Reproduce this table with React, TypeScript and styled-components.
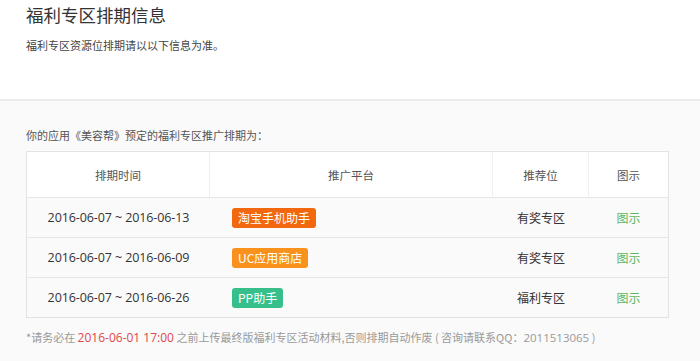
import React from "react";
import styled, { createGlobalStyle } from "styled-components";

const Global = createGlobalStyle`
  html, body { margin: 0; padding: 0; }
  body {
    background: #fafafa;
    font-family: "Microsoft YaHei", "Noto Sans CJK SC", "Open Sans", sans-serif;
    color: #333;
  }
`;

const Header = styled.header`
  background: #fff;
  height: 97px;
  border-bottom: 2px solid #ececec;
  padding: 2px 0 0 26px;
  box-sizing: content-box;
`;

const Title = styled.h1`
  margin: 0;
  font-size: 17.5px;
  font-weight: normal;
  line-height: 26px;
  color: #333;
`;

const Sub = styled.p`
  margin: 9px 0 0;
  font-size: 11px;
  line-height: 16px;
  color: #444;
`;

const Main = styled.main`
  padding: 26px 31px 0 26px;
`;

const Intro = styled.p`
  margin: 0 0 8px;
  font-size: 11px;
  line-height: 16px;
  color: #555;
`;

const Table = styled.div`
  border: 1px solid #e3e3e3;
  width: 643px;
  box-sizing: border-box;
`;

const Row = styled.div<{ $head?: boolean }>`
  display: grid;
  grid-template-columns: 183px 283px 96px 1fr;
  box-sizing: border-box;
  height: ${(p) => (p.$head ? 45 : 40)}px;
  background: ${(p) => (p.$head ? "#fff" : "#fafafa")};
  border-top: ${(p) => (p.$head ? "none" : "1px solid #e6e6e6")};
`;

const Cell = styled.div<{ $head?: boolean; $left?: boolean; $green?: boolean }>`
  display: flex;
  align-items: center;
  justify-content: ${(p) => (p.$left ? "flex-start" : "center")};
  padding-left: ${(p) => (p.$left ? "22px" : "0")};
  font-size: ${(p) => (p.$head ? "11.5px" : "12px")};
  color: ${(p) => (p.$green ? "#5db55d" : p.$head ? "#555" : "#333")};
  border-right: ${(p) => (p.$head ? "1px solid #f0f0f0" : "none")};
  &:last-child { border-right: none; }
`;

const DateText = styled.span`
  font-family: "Open Sans", "Noto Sans CJK SC", sans-serif;
  font-size: 12.5px;
  color: #333;
  letter-spacing: -0.1px;
`;

const Badge = styled.span<{ $bg: string }>`
  display: inline-block;
  background: ${(p) => p.$bg};
  color: #fff;
  font-size: 12px;
  line-height: 20px;
  height: 20px;
  padding: 0 6px;
  border-radius: 3px;
`;

const Footer = styled.p`
  margin: 10px 0 0;
  font-size: 11px;
  line-height: 18px;
  color: #999;
`;

const Red = styled.span`
  color: #e0474c;
  font-family: "Open Sans", "Noto Sans CJK SC", sans-serif;
  font-size: 12px;
`;

const Num = styled.span`
  font-family: "Open Sans", "Noto Sans CJK SC", sans-serif;
  font-size: 11.5px;
`;

const rows = [
  { date: "2016-06-07 ~ 2016-06-13", platform: "淘宝手机助手", bg: "#f2680e", slot: "有奖专区" },
  { date: "2016-06-07 ~ 2016-06-09", platform: "UC应用商店", bg: "#f8921c", slot: "有奖专区" },
  { date: "2016-06-07 ~ 2016-06-26", platform: "PP助手", bg: "#36bf8a", slot: "福利专区" },
];

export default function App() {
  return (
    <>
      <Global />
      <Header>
        <Title>福利专区排期信息</Title>
        <Sub>福利专区资源位排期请以以下信息为准。</Sub>
      </Header>
      <Main>
        <Intro>你的应用《美容帮》预定的福利专区推广排期为：</Intro>
        <Table>
          <Row $head>
            <Cell $head>排期时间</Cell>
            <Cell $head>推广平台</Cell>
            <Cell $head>推荐位</Cell>
            <Cell $head>图示</Cell>
          </Row>
          {rows.map((r) => (
            <Row key={r.platform}>
              <Cell>
                <DateText>{r.date}</DateText>
              </Cell>
              <Cell $left>
                <Badge $bg={r.bg}>{r.platform}</Badge>
              </Cell>
              <Cell>{r.slot}</Cell>
              <Cell $green>图示</Cell>
            </Row>
          ))}
        </Table>
        <Footer>
          *请务必在 <Red>2016-06-01 17:00</Red> 之前上传最终版福利专区活动材料,否则排期自动作废 ( 咨询请联系QQ：<Num>2011513065</Num> )
        </Footer>
      </Main>
    </>
  );
}
